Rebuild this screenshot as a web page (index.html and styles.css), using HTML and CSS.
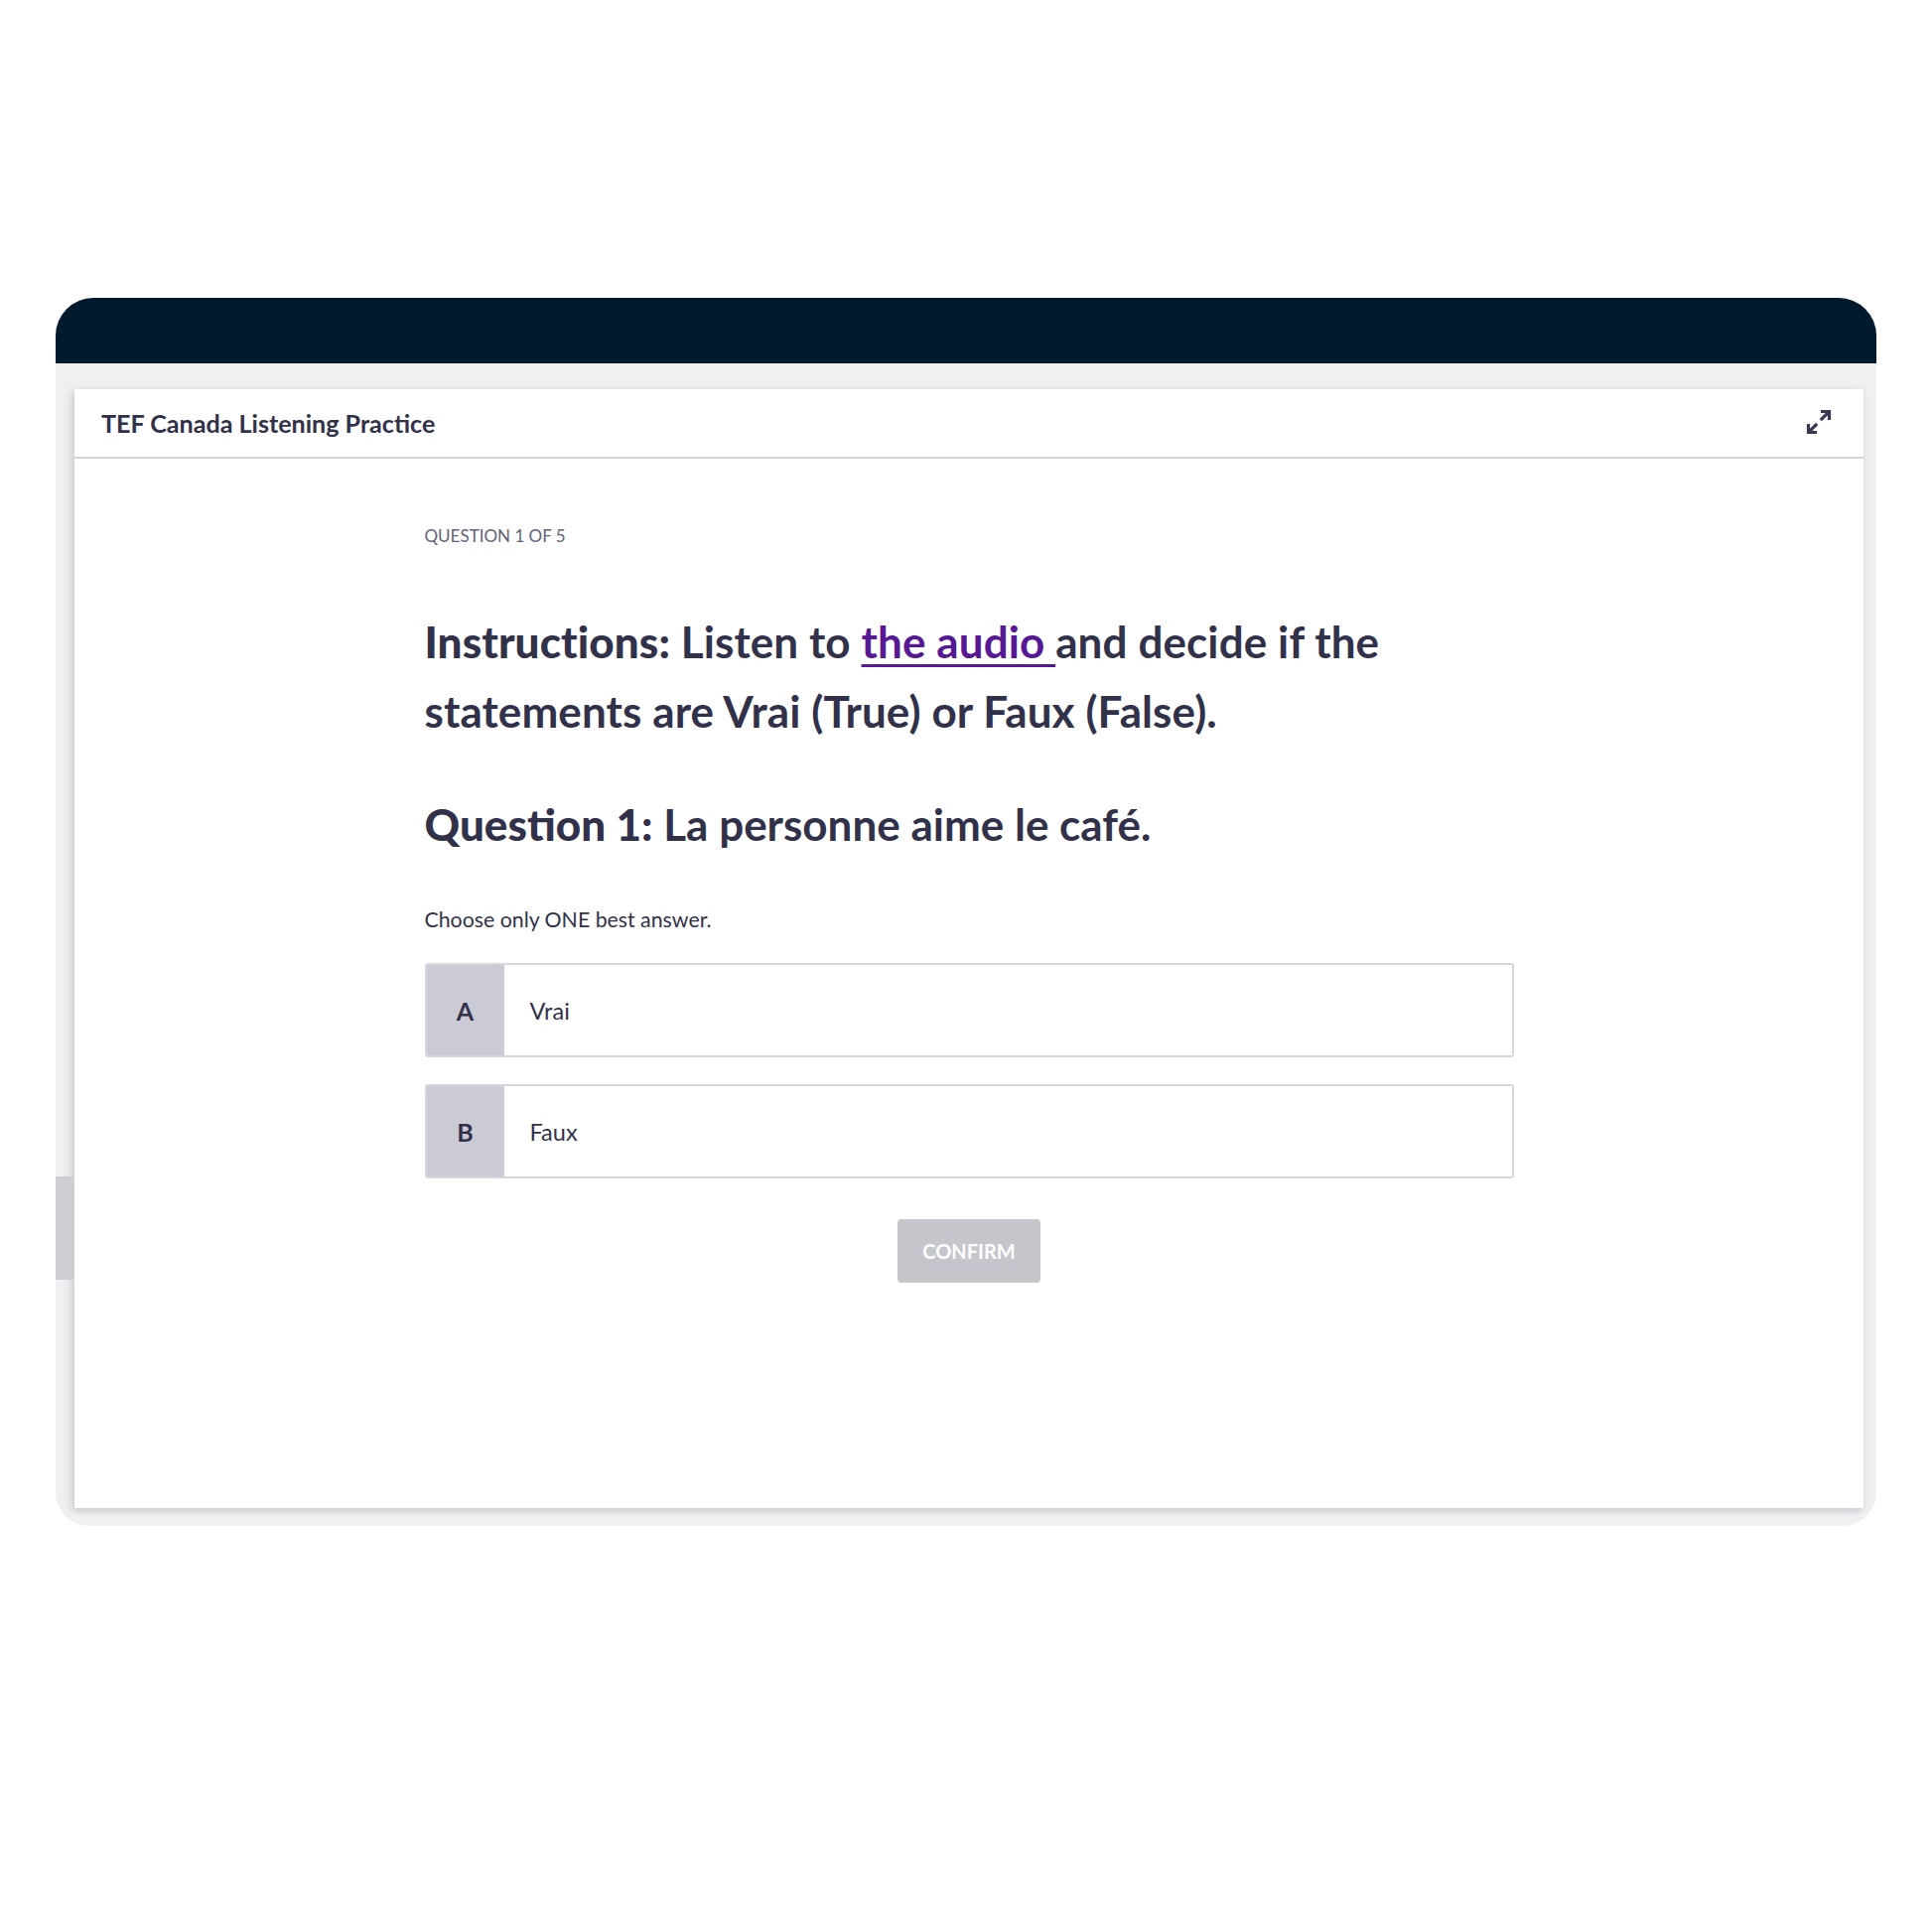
FILE: index.html
```html
<!DOCTYPE html>
<html lang="en">
<head>
<meta charset="utf-8">
<title>TEF Canada Listening Practice</title>
<link rel="stylesheet" href="styles.css">
</head>
<body>
<div class="frame">
  <div class="topbar"></div>
  <div class="stage">
    <div class="scroll-thumb"></div>
    <div class="card">
      <div class="card-header">
        <span class="card-title">TEF Canada Listening Practice</span>
        <svg class="expand" width="28" height="28" viewBox="0 0 28 28" fill="none" stroke="#383a52" stroke-width="3.2" stroke-linecap="square" stroke-linejoin="miter">
          <path d="M17 11 L24 4"/>
          <path d="M17.5 3.5 H24.5 V10.5"/>
          <path d="M11 17 L4 24"/>
          <path d="M3.5 17.5 V24.5 H10.5"/>
        </svg>
      </div>
      <div class="card-body">
        <div class="column">
          <div class="progress">QUESTION 1 OF 5</div>
          <p class="instructions"><strong>Instructions:</strong> Listen to <a class="link" href="#">the audio </a>and decide if the statements are Vrai (True) or Faux (False).</p>
          <p class="question"><strong>Question 1:</strong> La personne aime le café.</p>
          <p class="hint">Choose only ONE best answer.</p>
          <div class="options">
            <div class="option">
              <div class="option-key">A</div>
              <div class="option-text">Vrai</div>
            </div>
            <div class="option">
              <div class="option-key">B</div>
              <div class="option-text">Faux</div>
            </div>
          </div>
          <div class="actions">
            <button class="confirm" type="button">CONFIRM</button>
          </div>
        </div>
      </div>
    </div>
  </div>
</div>
</body>
</html>
```

FILE: styles.css
```css
* { box-sizing: border-box; }

html, body {
  margin: 0;
  padding: 0;
  background: #ffffff;
}

body {
  font-family: "Lato", "Noto Sans", sans-serif;
  color: #31324a;
}

.frame {
  width: 1834px;
  margin: 300px 0 0 56px;
}

.topbar {
  height: 66px;
  background: #021a2e;
  border-radius: 38px 38px 0 0;
}

.stage {
  position: relative;
  background: #f0f0f2;
  padding: 26px 13px 18px 19px;
  border-radius: 0 0 34px 34px;
}

.scroll-thumb {
  position: absolute;
  left: 0;
  top: 819px;
  width: 19px;
  height: 104px;
  background: #cdcdd3;
}

.card {
  background: #ffffff;
  height: 1127px;
  display: flex;
  flex-direction: column;
  box-shadow: -4px 2px 8px rgba(40, 42, 60, 0.12), 0 3px 6px rgba(40, 42, 60, 0.10);
}

.card-header {
  height: 70px;
  flex: none;
  display: flex;
  align-items: center;
  justify-content: space-between;
  padding: 0 31px 0 27px;
  border-bottom: 2px solid #d3d3db;
}

.card-title {
  font-size: 25.1px;
  font-weight: 700;
  letter-spacing: 0;
  color: #31324a;
}

.expand { display: block; margin-top: -3px; }

.card-body {
  flex: 1;
  display: flex;
  justify-content: center;
}

.column {
  width: 1097px;
  padding-top: 66px;
}

.progress {
  font-size: 17px;
  line-height: 24px;
  color: #62637a;
}

.instructions {
  margin: 59px 0 0;
  font-size: 44px;
  line-height: 70px;
  font-weight: 700;
  letter-spacing: 0.1px;
  color: #31324a;
}

.instructions strong,
.question strong {
  font-weight: 900;
}

.link {
  color: #561993;
  text-decoration: underline;
  text-decoration-thickness: 3px;
  text-underline-offset: 6px;
}

.question {
  margin: 44px 0 0;
  font-size: 44px;
  line-height: 70px;
  font-weight: 700;
  letter-spacing: 0;
}

.hint {
  margin: 47px 0 0;
  font-size: 21.3px;
  line-height: 28px;
  letter-spacing: 0;
}

.options {
  margin-top: 30px;
  display: flex;
  flex-direction: column;
  gap: 27px;
}

.option {
  height: 95px;
  display: flex;
  border: 2px solid #d6d6de;
  border-radius: 3px;
  overflow: hidden;
  background: #ffffff;
}

.option-key {
  width: 78px;
  flex: none;
  display: flex;
  align-items: center;
  justify-content: center;
  background: #cbcbd6;
  font-size: 25px;
  font-weight: 700;
  color: #31324a;
}

.option-text {
  display: flex;
  align-items: center;
  padding-left: 26px;
  font-size: 23.5px;
  color: #31324a;
}

.actions {
  margin-top: 41px;
  display: flex;
  justify-content: center;
}

.confirm {
  width: 144px;
  height: 64px;
  border: none;
  border-radius: 4px;
  background: #c5c6cc;
  color: #ffffff;
  font-family: "Lato", "Noto Sans", sans-serif;
  font-size: 20px;
  font-weight: 700;
  letter-spacing: 0;
  padding: 0;
}
```
